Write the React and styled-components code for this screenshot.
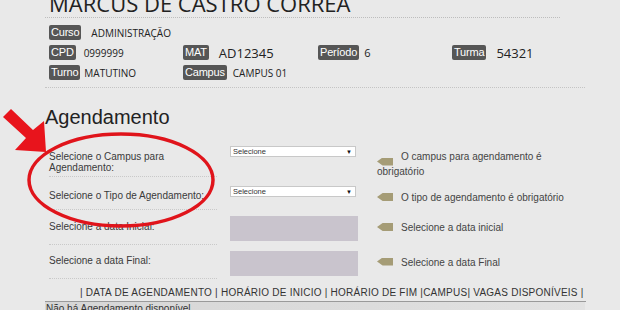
import React from "react";
import styled, { createGlobalStyle } from "styled-components";

const GlobalStyle = createGlobalStyle`
  html, body {
    margin: 0;
    padding: 0;
    background: #e9e9e9;
  }
  body {
    font-family: "Liberation Sans", Arial, sans-serif;
    color: #333;
  }
`;

const Page = styled.div`
  position: relative;
  width: 620px;
  height: 310px;
  overflow: hidden;
  padding-left: 45px;
  box-sizing: border-box;
`;

const StudentName = styled.h1`
  margin: -11px 0 0;
  width: 515px;
  padding-left: 4px;
  box-sizing: border-box;
  font-family: "Open Sans", sans-serif;
  font-weight: 400;
  font-size: 22px;
  line-height: 28px;
  color: #222;
  border-bottom: 1px dotted #bdbdbd;
`;

const InfoGrid = styled.div`
  display: grid;
  grid-template-columns: 134px 135px 134px 100px;
  grid-auto-rows: 15px;
  row-gap: 5px;
  width: 540px;
  padding: 7px 0 7px 4px;
  box-sizing: border-box;
  border-bottom: 1px dotted #c4c4c4;
`;

const InfoItem = styled.div`
  display: flex;
  align-items: center;
  gap: ${(p) => p.$gap}px;
  grid-column: ${(p) => p.$col || "auto"};
`;

const Badge = styled.span`
  display: inline-block;
  height: 15px;
  line-height: 15px;
  padding: 0 2px;
  border-radius: 2px;
  background: #565656;
  color: #fff;
  font-family: "Liberation Sans", Arial, sans-serif;
  font-size: 11px;
  letter-spacing: -0.2px;
`;

const InfoValue = styled.span`
  font-family: "Open Sans", sans-serif;
  font-size: ${(p) => p.$size || 10}px;
  color: #222;
`;

const SectionTitle = styled.h2`
  margin: 18px 0 0;
  font-weight: 400;
  font-size: 20px;
  line-height: 23px;
  color: #222;
`;

const Form = styled.div`
  margin-top: 14px;
  padding-left: 4px;
`;

const FormRow = styled.div`
  display: grid;
  grid-template-columns: 168px 13px 147px 211px;
  height: ${(p) => p.$h}px;
`;

const FieldLabel = styled.div`
  grid-column: 1;
  display: flex;
  align-items: center;
  padding-top: ${(p) => p.$pt || 0}px;
  border-bottom: 1px dotted #c9c9c9;
  font-size: 10px;
  line-height: 10.5px;
  color: #3a3a3a;
`;

const FakeSelect = styled.div`
  grid-column: 3;
  align-self: start;
  margin-top: ${(p) => p.$top}px;
  width: 126px;
  height: 11px;
  box-sizing: border-box;
  display: flex;
  align-items: center;
  justify-content: space-between;
  padding: 0 3px 0 2px;
  background: #fff;
  border: 1px solid #c8c8c8;
  font-size: 7.5px;
  color: #333;
`;

const Caret = styled.span`
  font-size: 6px;
  color: #111;
`;

const DateBox = styled.div`
  grid-column: 3;
  align-self: center;
  margin-top: 2px;
  width: 128px;
  height: 25px;
  background: #c9c4cd;
`;

const Message = styled.div`
  grid-column: 4;
  align-self: center;
  margin-top: ${(p) => p.$top || 0}px;
  font-size: 10px;
  line-height: 11px;
  color: #444;
`;

const Tag = styled.span`
  display: inline-block;
  width: 16px;
  height: 8px;
  margin-right: 8px;
  vertical-align: ${(p) => p.$drop || 0}px;
  background: #a59c76;
  clip-path: polygon(35% 0, 100% 0, 100% 100%, 35% 100%, 0 50%);
`;

const TableHead = styled.div`
  margin-top: 8px;
  width: 541px;
  padding: 0 0 2px 35px;
  box-sizing: border-box;
  border-bottom: 1px solid #9a9a9a;
  font-size: 10px;
  line-height: 12px;
  letter-spacing: 0.24px;
  color: #333;
  white-space: nowrap;
`;

const EmptyRow = styled.div`
  width: 540px;
  padding: 1px 0 0 1px;
  box-sizing: border-box;
  background: linear-gradient(90deg, #d6d6d6, #dcdcdc 60%, #e2e2e2);
  font-size: 10px;
  line-height: 12px;
  color: #333;
`;

const Markup = styled.svg`
  position: absolute;
  left: 0;
  top: 0;
  pointer-events: none;
`;

const info = [
  { label: "Curso", value: "ADMINISTRAÇÃO", gap: 10, col: "1 / span 4" },
  { label: "CPD", value: "0999999", gap: 8 },
  { label: "MAT", value: "AD12345", gap: 10, size: 13 },
  { label: "Período", value: "6", gap: 5, size: 11 },
  { label: "Turma", value: "54321", gap: 10, size: 13 },
  { label: "Turno", value: "MATUTINO", gap: 4 },
  { label: "Campus", value: "CAMPUS 01", gap: 6 },
];

export default function App() {
  return (
    <>
      <GlobalStyle />
      <Page>
        <StudentName>MARCUS DE CASTRO CORREA</StudentName>
        <InfoGrid>
          {info.map((item) => (
            <InfoItem key={item.label} $gap={item.gap} $col={item.col}>
              <Badge>{item.label}</Badge>
              <InfoValue $size={item.size}>{item.value}</InfoValue>
            </InfoItem>
          ))}
        </InfoGrid>

        <SectionTitle>Agendamento</SectionTitle>

        <Form>
          <FormRow $h={34}>
            <FieldLabel $pt={6}>
              Selecione o Campus para
              <br />
              Agendamento:
            </FieldLabel>
            <FakeSelect $top={3}>
              Selecione <Caret>▼</Caret>
            </FakeSelect>
            <Message $top={7}>
              <Tag $drop={-6} />
              O campus para agendamento é obrigatório
            </Message>
          </FormRow>
          <FormRow $h={33}>
            <FieldLabel $pt={6}>Selecione o Tipo de Agendamento:</FieldLabel>
            <FakeSelect $top={9}>
              Selecione <Caret>▼</Caret>
            </FakeSelect>
            <Message $top={8}>
              <Tag />
              O tipo de agendamento é obrigatório
            </Message>
          </FormRow>
          <FormRow $h={35}>
            <FieldLabel>Selecione a data Inicial:</FieldLabel>
            <DateBox />
            <Message>
              <Tag />
              Selecione a data inicial
            </Message>
          </FormRow>
          <FormRow $h={34}>
            <FieldLabel>Selecione a data Final:</FieldLabel>
            <DateBox />
            <Message>
              <Tag />
              Selecione a data Final
            </Message>
          </FormRow>
        </Form>

        <TableHead>
          | DATA DE AGENDAMENTO | HORÁRIO DE INICIO | HORÁRIO DE FIM |CAMPUS| VAGAS DISPONÍVEIS |
        </TableHead>
        <EmptyRow>Não há Agendamento disponível</EmptyRow>

        <Markup width="620" height="310" viewBox="0 0 620 310">
          <polygon
            fill="#e8141c"
            points="3,117 11,109 33,130 44,121 46,152 15,150 26,138"
          />
          <ellipse
            cx="121"
            cy="180"
            rx="92"
            ry="46"
            fill="none"
            stroke="#e0141b"
            strokeWidth="3.5"
          />
        </Markup>
      </Page>
    </>
  );
}
